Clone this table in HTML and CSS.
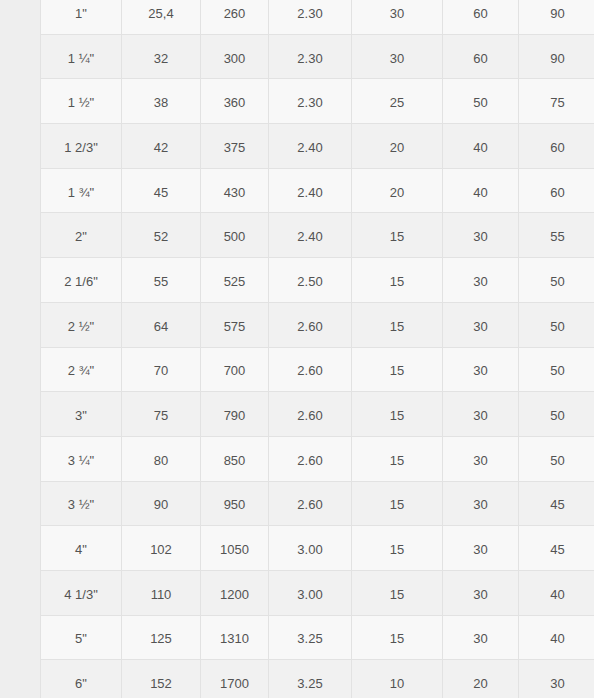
FILE: index.html
```html
<!DOCTYPE html>
<html>
<head>
<meta charset="utf-8">
<link rel="stylesheet" href="styles.css">
</head>
<body>
<div class="page">
  <div class="strip"></div>
  <div class="viewport">
    <table class="spec">
      <colgroup>
        <col class="c1"><col class="c2"><col class="c3"><col class="c4"><col class="c5"><col class="c6"><col class="c7">
      </colgroup>
      <tbody>
        <tr><td>1"</td><td>25,4</td><td>260</td><td>2.30</td><td>30</td><td>60</td><td>90</td></tr>
        <tr><td>1 ¼"</td><td>32</td><td>300</td><td>2.30</td><td>30</td><td>60</td><td>90</td></tr>
        <tr><td>1 ½"</td><td>38</td><td>360</td><td>2.30</td><td>25</td><td>50</td><td>75</td></tr>
        <tr><td>1 2/3"</td><td>42</td><td>375</td><td>2.40</td><td>20</td><td>40</td><td>60</td></tr>
        <tr><td>1 ¾"</td><td>45</td><td>430</td><td>2.40</td><td>20</td><td>40</td><td>60</td></tr>
        <tr><td>2"</td><td>52</td><td>500</td><td>2.40</td><td>15</td><td>30</td><td>55</td></tr>
        <tr><td>2 1/6"</td><td>55</td><td>525</td><td>2.50</td><td>15</td><td>30</td><td>50</td></tr>
        <tr><td>2 ½"</td><td>64</td><td>575</td><td>2.60</td><td>15</td><td>30</td><td>50</td></tr>
        <tr><td>2 ¾"</td><td>70</td><td>700</td><td>2.60</td><td>15</td><td>30</td><td>50</td></tr>
        <tr><td>3"</td><td>75</td><td>790</td><td>2.60</td><td>15</td><td>30</td><td>50</td></tr>
        <tr><td>3 ¼"</td><td>80</td><td>850</td><td>2.60</td><td>15</td><td>30</td><td>50</td></tr>
        <tr><td>3 ½"</td><td>90</td><td>950</td><td>2.60</td><td>15</td><td>30</td><td>45</td></tr>
        <tr><td>4"</td><td>102</td><td>1050</td><td>3.00</td><td>15</td><td>30</td><td>45</td></tr>
        <tr><td>4 1/3"</td><td>110</td><td>1200</td><td>3.00</td><td>15</td><td>30</td><td>40</td></tr>
        <tr><td>5"</td><td>125</td><td>1310</td><td>3.25</td><td>15</td><td>30</td><td>40</td></tr>
        <tr><td>6"</td><td>152</td><td>1700</td><td>3.25</td><td>10</td><td>20</td><td>30</td></tr>
      </tbody>
    </table>
  </div>
</div>
</body>
</html>
```

FILE: styles.css
```css
html, body {
  margin: 0;
  padding: 0;
  background: #ffffff;
  overflow: hidden;
}
.page {
  display: flex;
  width: 594px;
  height: 698px;
  overflow: hidden;
}
.strip {
  flex: 0 0 40px;
  background: #eeeeee;
}
.viewport {
  flex: 1 1 auto;
  overflow: hidden;
}
.spec {
  border-collapse: collapse;
  table-layout: fixed;
  width: 556px;
  margin-top: -11px;
  font-family: "Liberation Sans", Arial, sans-serif;
  font-size: 13px;
  color: #535353;
}
.c1 { width: 81px; }
.c2 { width: 79px; }
.c3 { width: 68px; }
.c4 { width: 83px; }
.c5 { width: 91px; }
.c6 { width: 76px; }
.c7 { width: 78px; }
.spec td {
  border: 1px solid #e2e2e2;
  height: 40.7px;
  padding: 3px 0 0 0;
  text-align: center;
  vertical-align: middle;
}
.spec tr:nth-child(odd) td { background: #f8f8f8; }
.spec tr:nth-child(even) td { background: #f1f1f1; }
```
